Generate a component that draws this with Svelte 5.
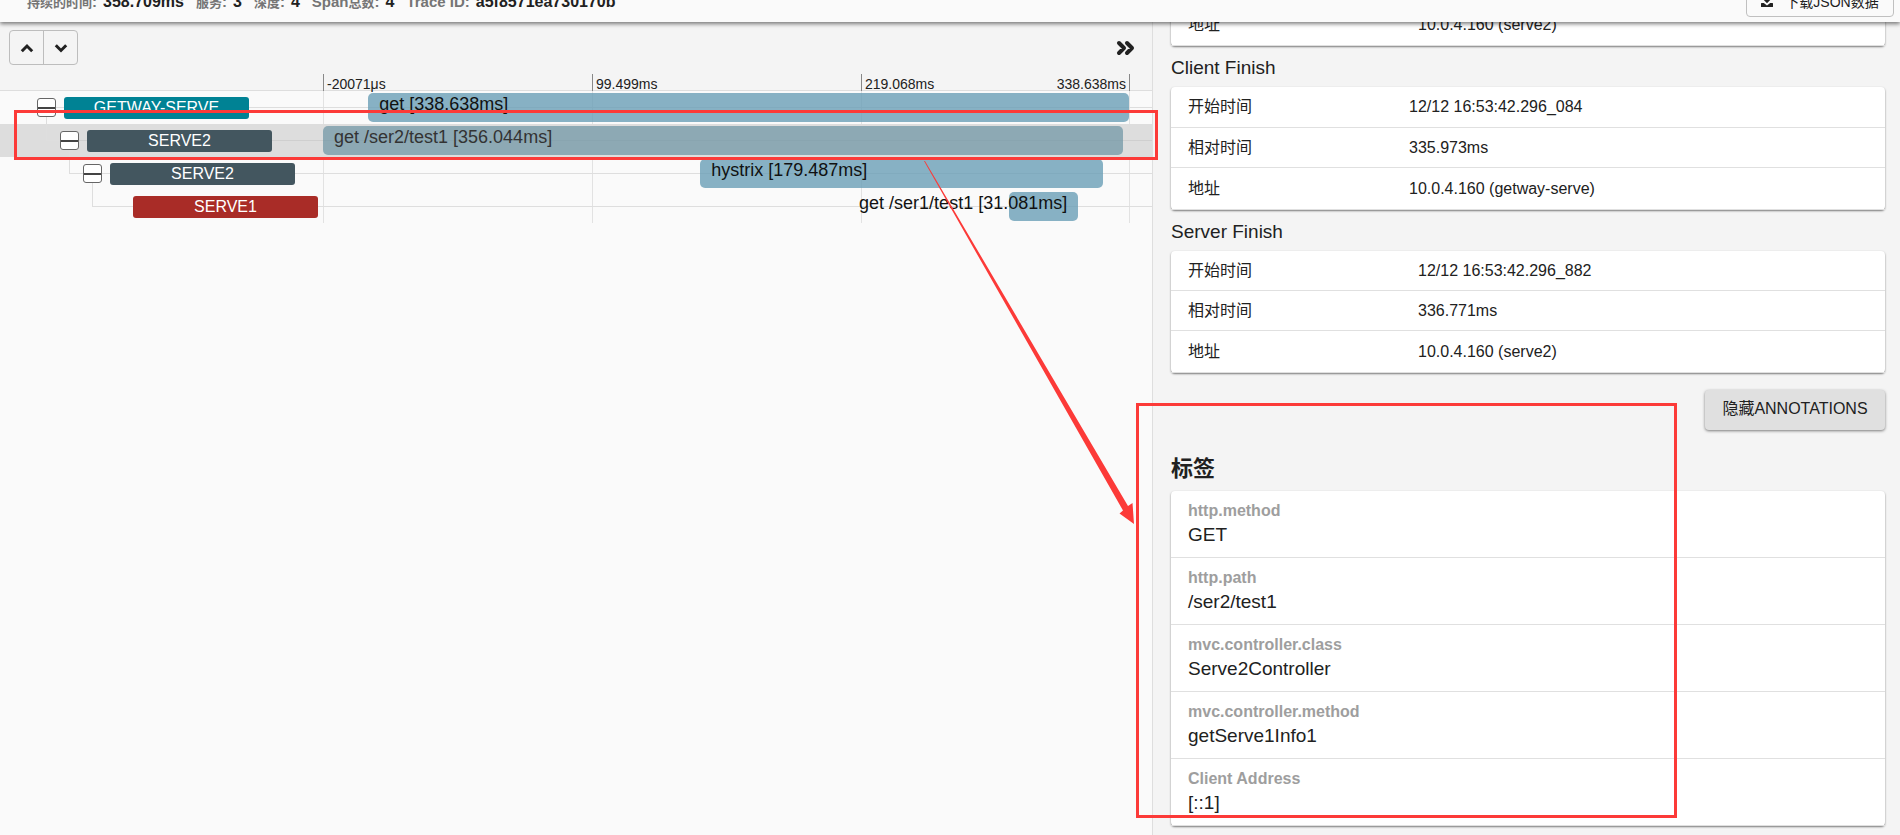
<script>
  const summary = [
    ['', '持续的时间', '358.709ms'],
    ['', '服务', '3'],
    ['', '深度', '4'],
    ['Span', '总数', '4'],
    ['Trace ID', '', 'a5f8571ea730170b'],
  ];

  const spans = [
    { service: 'GETWAY-SERVE', color: '#008294', depth: 0, left: 5.6, width: 94.4, label: 'get [338.638ms]', leaf: false },
    { service: 'SERVE2', color: '#43565f', depth: 1, left: 0, width: 99.25, label: 'get /ser2/test1 [356.044ms]', leaf: false, selected: true },
    { service: 'SERVE2', color: '#43565f', depth: 2, left: 46.8, width: 50, label: 'hystrix [179.487ms]', leaf: false },
    { service: 'SERVE1', color: '#a92c27', depth: 3, left: 85.1, width: 8.6, label: 'get /ser1/test1 [31.081ms]', leaf: true },
  ];

  const annotations = [
    { title: 'Server Start', key: 247, rows: [['地址', '10.0.4.160 (serve2)']], clipped: true },
    {
      title: 'Client Finish',
      key: 238,
      rows: [['开始时间', '12/12 16:53:42.296_084'], ['相对时间', '335.973ms'], ['地址', '10.0.4.160 (getway-serve)']],
    },
    {
      title: 'Server Finish',
      key: 247,
      rows: [['开始时间', '12/12 16:53:42.296_882'], ['相对时间', '336.771ms'], ['地址', '10.0.4.160 (serve2)']],
    },
  ];

  const tags = [
    ['http.method', 'GET'],
    ['http.path', '/ser2/test1'],
    ['mvc.controller.class', 'Serve2Controller'],
    ['mvc.controller.method', 'getServe1Info1'],
    ['Client Address', '[::1]'],
  ];
</script>

<div class="page">
  <header>
    <dl class="summary">
      {#each summary as [latin, han, value]}
        <div><dt>{latin}{#if han}<span lang="zh">{han}</span>{/if}:</dt><dd>{value}</dd></div>
      {/each}
    </dl>
    <button class="download" type="button">
      <svg viewBox="0 0 12 12" width="12" height="12" aria-hidden="true">
        <path d="M4.500 0h3v4h2.700L6 8.200 1.800 4h2.700zM.6 8h2.200L6 10.600 9.200 8h2.200c.4 0 .6.2.6.6v2.800c0 .4-.2.6-.6.6H.6c-.4 0-.6-.2-.6-.6V8.600c0-.4.2-.6.6-.6z" />
      </svg>
      下载JSON数据
    </button>
  </header>

  <div class="columns">
    <main>
      <div class="toolbar">
        <div class="group">
          <button type="button" aria-label="Previous">
            <svg viewBox="0 0 14 14" width="14" height="14"><path d="M1.800 10.200L7 5l5.200 5.200" /></svg>
          </button>
          <button type="button" aria-label="Next">
            <svg viewBox="0 0 14 14" width="14" height="14"><path d="M1.800 4.300L7 9.500l5.200-5.200" /></svg>
          </button>
        </div>
        <button class="expand" type="button" aria-label="Toggle details">
          <svg viewBox="0 0 20 16" width="20" height="16"><path d="M3 3l5 5-5 5M11 3l5 5-5 5" /></svg>
        </button>
      </div>
      <div class="ticks">
        <span>-20071μs</span><span>99.499ms</span><span>219.068ms<em>338.638ms</em></span>
      </div>
      <div class="tree">
        <div class="grid"><i></i><i></i><i></i></div>
        {#each spans as span}
          <div class="row" class:selected={span.selected} style="background-position: {span.depth * 23 + (span.leaf ? 23 : 37)}px 16px">
            <div class="names" style="padding-left: {span.depth * 23 + (span.leaf ? 23 : 37)}px" class:leaf={span.leaf}>
              {#if span.depth > 0}<i class="elbow" style="left: {span.depth * 23 + 23}px"></i>{/if}
              {#if !span.leaf}<button class="toggle" type="button" aria-label="Collapse"></button>{/if}
              <div class="service" style="background: {span.color}">{span.service}</div>
            </div>
            <div class="track">
              <div class="bar" class:end={span.leaf} style="margin-left: {span.left}%; width: {span.width}%">
                <span>{span.label}</span>
              </div>
            </div>
          </div>
        {/each}
      </div>
    </main>

    <aside>
      {#each annotations as item}
        <section class:clipped={item.clipped}>
          {#if !item.clipped}<h3>{item.title}</h3>{/if}
          <table>
            <tbody>
              {#each item.rows as [name, value]}
                <tr><th scope="row" style="width: {item.key}px">{name}</th><td>{value}</td></tr>
              {/each}
            </tbody>
          </table>
        </section>
      {/each}
      <button class="hide" type="button">隐藏ANNOTATIONS</button>
      <h2>标签</h2>
      <dl class="tags">
        {#each tags as [name, value]}
          <div><dt>{name}</dt><dd>{value}</dd></div>
        {/each}
      </dl>
    </aside>
  </div>

  <div class="mark mark-row"></div>
  <div class="mark mark-tags"></div>
  <svg class="arrow" viewBox="0 0 211 365" width="211" height="365" aria-hidden="true">
    <path d="M0 0l.8-.3L204 345l4.500-3 1.500 21-14.500-10.500 3.500-3z" />
  </svg>
</div>

<style>
  :global(body) {
    margin: 0;
    overflow: hidden;
    background: #fafafa;
    color: #212121;
    font-family: "Liberation Sans", Arial, "Noto Sans CJK SC", sans-serif;
    font-size: 14px;
  }
  .page, .page * { box-sizing: border-box; }
  .page { position: relative; height: 100vh; overflow: hidden; display: flex; flex-direction: column; }
  button { font: inherit; color: inherit; padding: 0; cursor: pointer; }
  dl, dd, h2, h3 { margin: 0; }
  header {
    position: relative; z-index: 2; flex: none;
    display: flex; justify-content: space-between; align-items: flex-end;
    height: 22px; padding: 0 6px 5px 27px;
    background: #fafafa;
    box-shadow: 0 2px 4px rgba(0, 0, 0, 0.5);
  }
  .summary { display: flex; gap: 12px; padding-bottom: 4px; font-size: 15px; line-height: 20px; font-weight: bold; }
  .summary div { display: flex; gap: 6px; }
  .summary dt { color: #757575; }
  .summary dt span { font-size: 13px; }
  .summary dd { font-size: 16px; }
  .download {
    flex: none; display: flex; align-items: center; justify-content: center; gap: 12px;
    width: 148px; height: 32px; border: 1px solid #c0c0c0; border-radius: 4px; background: none;
  }
  .download svg { fill: #212121; }

  .columns { flex: 1; display: flex; min-height: 0; }
  main { flex: 1; min-width: 0; }
  .toolbar {
    display: flex; justify-content: space-between; align-items: flex-start;
    height: 52px; padding: 8px 15px 0 9px; background: #f4f4f4;
  }
  .group { display: flex; border: 1px solid #bdbdbd; border-radius: 4px; }
  .group button { width: 33px; height: 33px; border: 0; background: none; }
  .group button + button { width: 34px; border-left: 1px solid #bdbdbd; }
  .toolbar svg { display: block; margin: 0 auto; fill: none; stroke: #212121; stroke-width: 3; }
  .toolbar .expand svg { stroke-width: 4; stroke-linecap: round; stroke-linejoin: round; }
  .expand { width: 22px; height: 35px; border: 0; background: none; }
  .ticks {
    display: grid; grid-template-columns: repeat(3, 1fr);
    height: 17px; padding: 0 22px 0 323px;
    background: #f4f4f4; border-bottom: 1px solid #dedede;
  }
  .ticks span { display: flex; justify-content: space-between; border-left: 1px solid #888; padding: 0 3px; line-height: 20px; }
  .ticks span:last-child { border-right: 1px solid #888; }
  .ticks em { font-style: normal; }

  .tree { position: relative; }
  .grid { position: absolute; inset: 0 22px 0 323px; display: grid; grid-template-columns: repeat(3, 1fr); }
  .grid i { border-left: 1px solid #e2e2e2; }
  .grid i:last-child { border-right: 1px solid #e2e2e2; }
  .row {
    position: relative; display: flex; height: 33px;
    background-image: linear-gradient(#dedede, #dedede);
    background-size: 100% 1px; background-repeat: no-repeat;
  }
  .row.selected { background-color: #dddddd; background-image: linear-gradient(#cfcfcf, #cfcfcf); }
  .names { flex: none; display: flex; align-items: center; gap: 8px; width: 323px; }
  .toggle {
    flex: none; width: 19px; height: 19px; border: 1px solid #666; border-radius: 3px;
    background: linear-gradient(#444, #444) 0 8px / 100% 2px no-repeat #fff;
  }
  .service {
    flex: none; width: 185px; height: 22px; border-radius: 3px;
    color: #fff; font-size: 16px; line-height: 22px; text-align: center;
  }
  .leaf { justify-content: flex-end; padding-right: 5px; }
  .elbow { position: absolute; top: -7px; width: 14px; height: 24px; border: solid #dedede; border-width: 0 0 1px 1px; }
  .track { flex: 1; min-width: 0; margin-right: 23px; padding-top: 2px; }
  .bar { display: flex; height: 29px; padding: 0 11px; border-radius: 5px; background: rgba(103, 156, 181, 0.78); color: #111; font-size: 18px; line-height: 22px; white-space: nowrap; }
  .bar.end { justify-content: flex-end; }
  .selected .bar { background: rgba(103, 145, 160, 0.68); color: #333; }

  aside { flex: none; width: 748px; padding: 0 15px 0 18px; border-left: 1px solid #dedede; background: #f4f4f4; }
  h3 { padding-top: 8px; height: 41px; font-size: 19px; font-weight: normal; line-height: 28px; }
  table {
    width: 100%; table-layout: fixed; border-collapse: collapse; border-radius: 4px;
    background: #fff; box-shadow: 0 1px 2px rgba(0, 0, 0, 0.5); font-size: 16px; line-height: 20px;
  }
  th, td { height: 40px; padding: 1px 17px 0; border-bottom: 1px solid #e0e0e0; text-align: left; font-weight: normal; }
  td { padding: 1px 0 0; }
  tr:last-child td { height: 42px; }
  .clipped { height: 24px; display: flex; align-items: flex-end; }
  .hide {
    display: block; margin: 17px 0 0 auto; padding-bottom: 3px; width: 180px; height: 40px; border: 0; border-radius: 4px;
    background: #e0e0e0; box-shadow: 0 1px 3px rgba(0, 0, 0, 0.5); font-size: 16px; line-height: 20px;
  }
  h2 { margin-top: 23px; height: 38px; font-size: 22px; line-height: 32px; }
  .tags { border-radius: 4px; background: #fff; box-shadow: 0 1px 2px rgba(0, 0, 0, 0.5); }
  .tags div { height: 67px; padding: 10px 17px 0; border-bottom: 1px solid #e0e0e0; }
  .tags dt { color: #9e9e9e; font-size: 16px; font-weight: bold; line-height: 20px; }
  .tags dd { font-size: 19px; line-height: 28px; }

  .mark { position: absolute; z-index: 3; border: 3px solid #fc3a38; pointer-events: none; }
  .mark-row { left: 14px; top: 110px; width: 1144px; height: 50px; }
  .mark-tags { left: 1136px; top: 403px; width: 541px; height: 415px; }
  .arrow { position: absolute; z-index: 3; left: 924px; top: 161px; fill: #fc3a38; pointer-events: none; }
</style>
